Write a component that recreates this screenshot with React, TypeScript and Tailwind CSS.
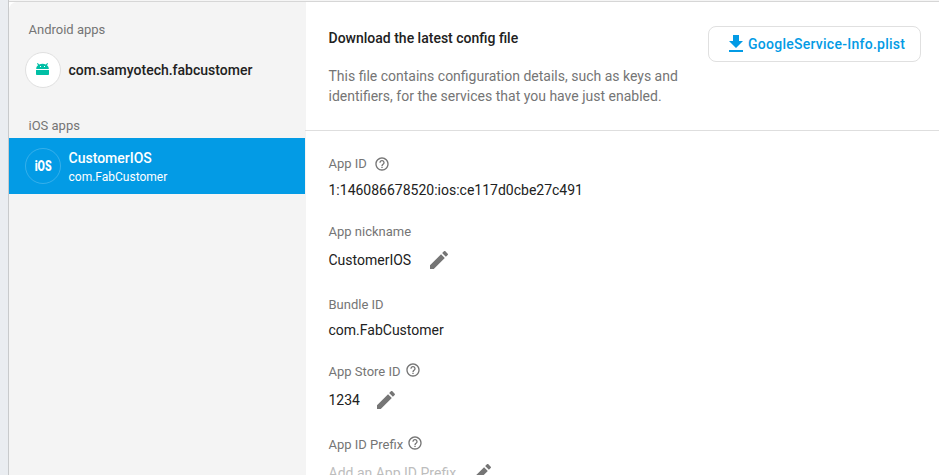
import type { ReactNode } from "react";

function HelpIcon({ className = "" }: { className?: string }) {
  return (
    <svg viewBox="0 0 24 24" className={`size-4 shrink-0 fill-[#757575] ${className}`}>
      <path d="M11 18h2v-2h-2v2zm1-16C6.48 2 2 6.48 2 12s4.48 10 10 10 10-4.48 10-10S17.52 2 12 2zm0 18c-4.41 0-8-3.59-8-8s3.59-8 8-8 8 3.59 8 8-3.59 8-8 8zm0-14c-2.21 0-4 1.79-4 4h2c0-1.1.9-2 2-2s2 .9 2 2c0 2-3 1.75-3 5h2c0-2.25 3-2.5 3-5 0-2.21-1.79-4-4-4z" />
    </svg>
  );
}

function EditIcon() {
  return (
    <svg viewBox="0 0 24 24" className="size-6 shrink-0 fill-[#757575]">
      <path d="M3 17.25V21h3.75L17.81 9.94l-3.75-3.75L3 17.25zM20.71 7.04c.39-.39.39-1.02 0-1.41l-2.34-2.34c-.39-.39-1.02-.39-1.41 0l-1.83 1.83 3.75 3.75 1.83-1.83z" />
    </svg>
  );
}

function DownloadIcon() {
  return (
    <svg viewBox="0 0 24 24" className="size-6 shrink-0 fill-[#039be5]">
      <path d="M19 9h-4V3H9v6H5l7 7 7-7zM5 18v2h14v-2H5z" />
    </svg>
  );
}

function AndroidIcon() {
  return (
    <svg viewBox="0 0 14 14" className="size-3.5 fill-[#00bfa5]">
      <path d="M0 7h13v4.200a.8.8 0 0 1-.8.8h-11.400a.8.8 0 0 1-.8-.8z" />
      <path
        fillRule="evenodd"
        d="M.2 6c0-1.600.7-3 1.800-3.700L1 .6l.8-.6 1.300 1.600a7 7 0 0 1 6.800 0L11.200 0l.8.6-1 1.700c1.100.7 1.800 2.100 1.800 3.700zM4 3v1h1v-1zm4 0v1h1v-1z"
      />
    </svg>
  );
}

function Label({ children }: { children: ReactNode }) {
  return <div className="flex h-5 items-center text-[13px] leading-5 text-[#757575]">{children}</div>;
}

function Value({ children }: { children: ReactNode }) {
  return <div className="flex h-6 items-center text-sm leading-6 text-[#212121]">{children}</div>;
}

export default function App() {
  return (
    <div className="flex h-[475px] w-full overflow-hidden bg-white font-['Roboto',sans-serif]">
      <div className="w-[9px] shrink-0 border-r border-[#c8cacc] bg-[#eaedf1]" />
      <div className="flex min-w-0 flex-1 flex-col">
        <div className="h-0.5 shrink-0 border-b border-[#d6d6d6] bg-[#f5f5f5]" />
        <div className="flex min-h-0 flex-1">
          <aside className="w-[297px] shrink-0 rounded-tl-lg bg-[#f4f4f4] pt-[18px]">
            <h2 className="pl-[19.5px] text-[13px] leading-5 text-[#757575]">Android apps</h2>
            <div className="flex h-15 items-center pl-4">
              <div className="flex size-9 items-center justify-center rounded-full border border-[#e0e0e0] bg-white">
                <AndroidIcon />
              </div>
              <span className="ml-[7.5px] text-sm font-medium text-[#212121]">com.samyotech.fabcustomer</span>
            </div>
            <h2 className="mt-4 pl-[19.5px] text-[13px] leading-5 text-[#757575]">iOS apps</h2>
            <div className="mt-0.5 flex h-14 w-[296px] items-center bg-[#039be5] pl-4 text-white">
              <div className="flex size-9 items-center justify-center rounded-full border border-white/20">
                <span className="inline-block scale-x-[0.76] text-sm leading-4 font-black">iOS</span>
              </div>
              <div className="ml-[7.5px] pt-px">
                <div className="-mt-px text-sm leading-5 font-medium">CustomerIOS</div>
                <div className="mt-px text-xs leading-4">com.FabCustomer</div>
              </div>
            </div>
          </aside>
          <main className="min-w-0 flex-1">
            <section className="-ml-px flex h-[129px] justify-between border-b border-[#dedede] pt-[24px] pr-[18px] pl-[23.5px]">
              <div className="w-[370px]">
                <h1 className="pt-0.5 text-sm leading-5 font-medium text-[#212121]">
                  Download the latest config file
                </h1>
                <p className="mt-[18px] text-sm leading-5 text-[#757575]">
                  This file contains configuration details, such as keys and identifiers, for the services that you
                  have just enabled.
                </p>
              </div>
              <button className="flex h-9 w-[213px] items-center rounded-lg border border-[#e0e0e0] pl-[15px] text-sm font-medium tracking-[0.26px] text-[#039be5]">
                <DownloadIcon />
                GoogleService-Info.plist
              </button>
            </section>
            <section className="pt-[23px] pl-[22.5px]">
              <Label>
                App ID
                <HelpIcon className="ml-[7px]" />
              </Label>
              <div className="mt-1">
                <Value>1:146086678520:ios:ce117d0cbe27c491</Value>
              </div>
              <div className="mt-5">
                <Label>App nickname</Label>
              </div>
              <div className="mt-1.5">
                <Value>
                  <span className="mr-4">CustomerIOS</span>
                  <EditIcon />
                </Value>
              </div>
              <div className="mt-[23px]">
                <Label>Bundle ID</Label>
              </div>
              <div className="mt-[3px]">
                <Value>com.FabCustomer</Value>
              </div>
              <div className="mt-5">
                <Label>
                  App Store ID
                  <HelpIcon className="mb-1 ml-1" />
                </Label>
              </div>
              <div className="mt-1.5">
                <Value>
                  <span className="mr-3.5">1234</span>
                  <EditIcon />
                </Value>
              </div>
              <div className="mt-[23px]">
                <Label>
                  App ID Prefix
                  <HelpIcon className="mb-1 ml-1" />
                </Label>
              </div>
              <div className="mt-1.5">
                <Value>
                  <span className="mr-3.5 text-[#bdbdbd]">Add an App ID Prefix</span>
                  <EditIcon />
                </Value>
              </div>
            </section>
          </main>
        </div>
      </div>
    </div>
  );
}
